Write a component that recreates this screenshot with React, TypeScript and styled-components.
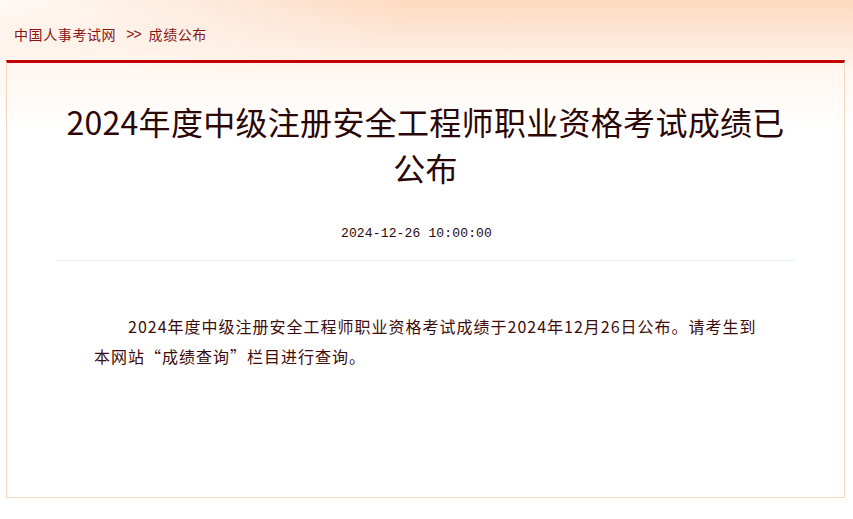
import styled, { createGlobalStyle } from 'styled-components';

const GlobalStyle = createGlobalStyle`
  html, body {
    margin: 0;
    padding: 0;
  }

  body {
    min-height: 519px;
    background:
      radial-gradient(ellipse 420px 90px at 0 0, rgba(255, 255, 255, 0.85), rgba(255, 255, 255, 0) 100%),
      linear-gradient(to bottom, #fdd9bf 0px, #fee9da 40px, #fff6ef 70px, #ffffff 130px);
    background-repeat: no-repeat;
    background-color: #ffffff;
    font-family: "Noto Sans CJK SC", "Noto Sans", sans-serif;
  }
`;

const Page = styled.div`
  width: 839px;
  margin-left: 6px;
`;

const Crumbs = styled.div`
  height: 60px;
  display: flex;
  align-items: center;
  padding-left: 8px;
  padding-top: 7px;
  box-sizing: border-box;
  font-size: 14px;
  letter-spacing: 0.6px;
  color: #8a1414;
`;

const CrumbLink = styled.span`
  color: #8a1414;
`;

const CrumbSep = styled.span`
  margin: 0 8px 0 10px;
  font-family: "Liberation Sans", sans-serif;
  letter-spacing: -1px;
`;

const Article = styled.div`
  border: 1px solid #f3d7bd;
  border-top: 3px solid #c40000;
  min-height: 438px;
  box-sizing: border-box;
  padding: 35px 50px 0 50px;
`;

const Title = styled.h1`
  margin: 0;
  font-size: 32px;
  font-weight: 400;
  line-height: 46px;
  text-align: center;
  color: #2b0606;
  letter-spacing: 0.3px;
`;

const Meta = styled.div`
  margin-top: 34px;
  padding: 0 18px 16px 0;
  border-bottom: 1px solid #e6eef4;
  text-align: center;
  font-family: "Liberation Mono", monospace;
  font-size: 13px;
  line-height: 20px;
  letter-spacing: 0.15px;
  color: #2b0606;
`;

const Body = styled.div`
  padding: 50px 30px 0 37px;
`;

const Paragraph = styled.p`
  margin: 0;
  font-size: 16px;
  line-height: 30px;
  letter-spacing: 1px;
  text-indent: 34px;
  color: #3d0c0c;
`;

export default function App() {
  return (
    <>
      <GlobalStyle />
      <Page>
        <Crumbs>
          <CrumbLink>中国人事考试网</CrumbLink>
          <CrumbSep>&gt;&gt;</CrumbSep>
          <CrumbLink>成绩公布</CrumbLink>
        </Crumbs>
        <Article>
          <Title>2024年度中级注册安全工程师职业资格考试成绩已公布</Title>
          <Meta>2024-12-26 10:00:00</Meta>
          <Body>
            <Paragraph>
              2024年度中级注册安全工程师职业资格考试成绩于2024年12月26日公布。请考生到本网站“成绩查询”栏目进行查询。
            </Paragraph>
          </Body>
        </Article>
      </Page>
    </>
  );
}
